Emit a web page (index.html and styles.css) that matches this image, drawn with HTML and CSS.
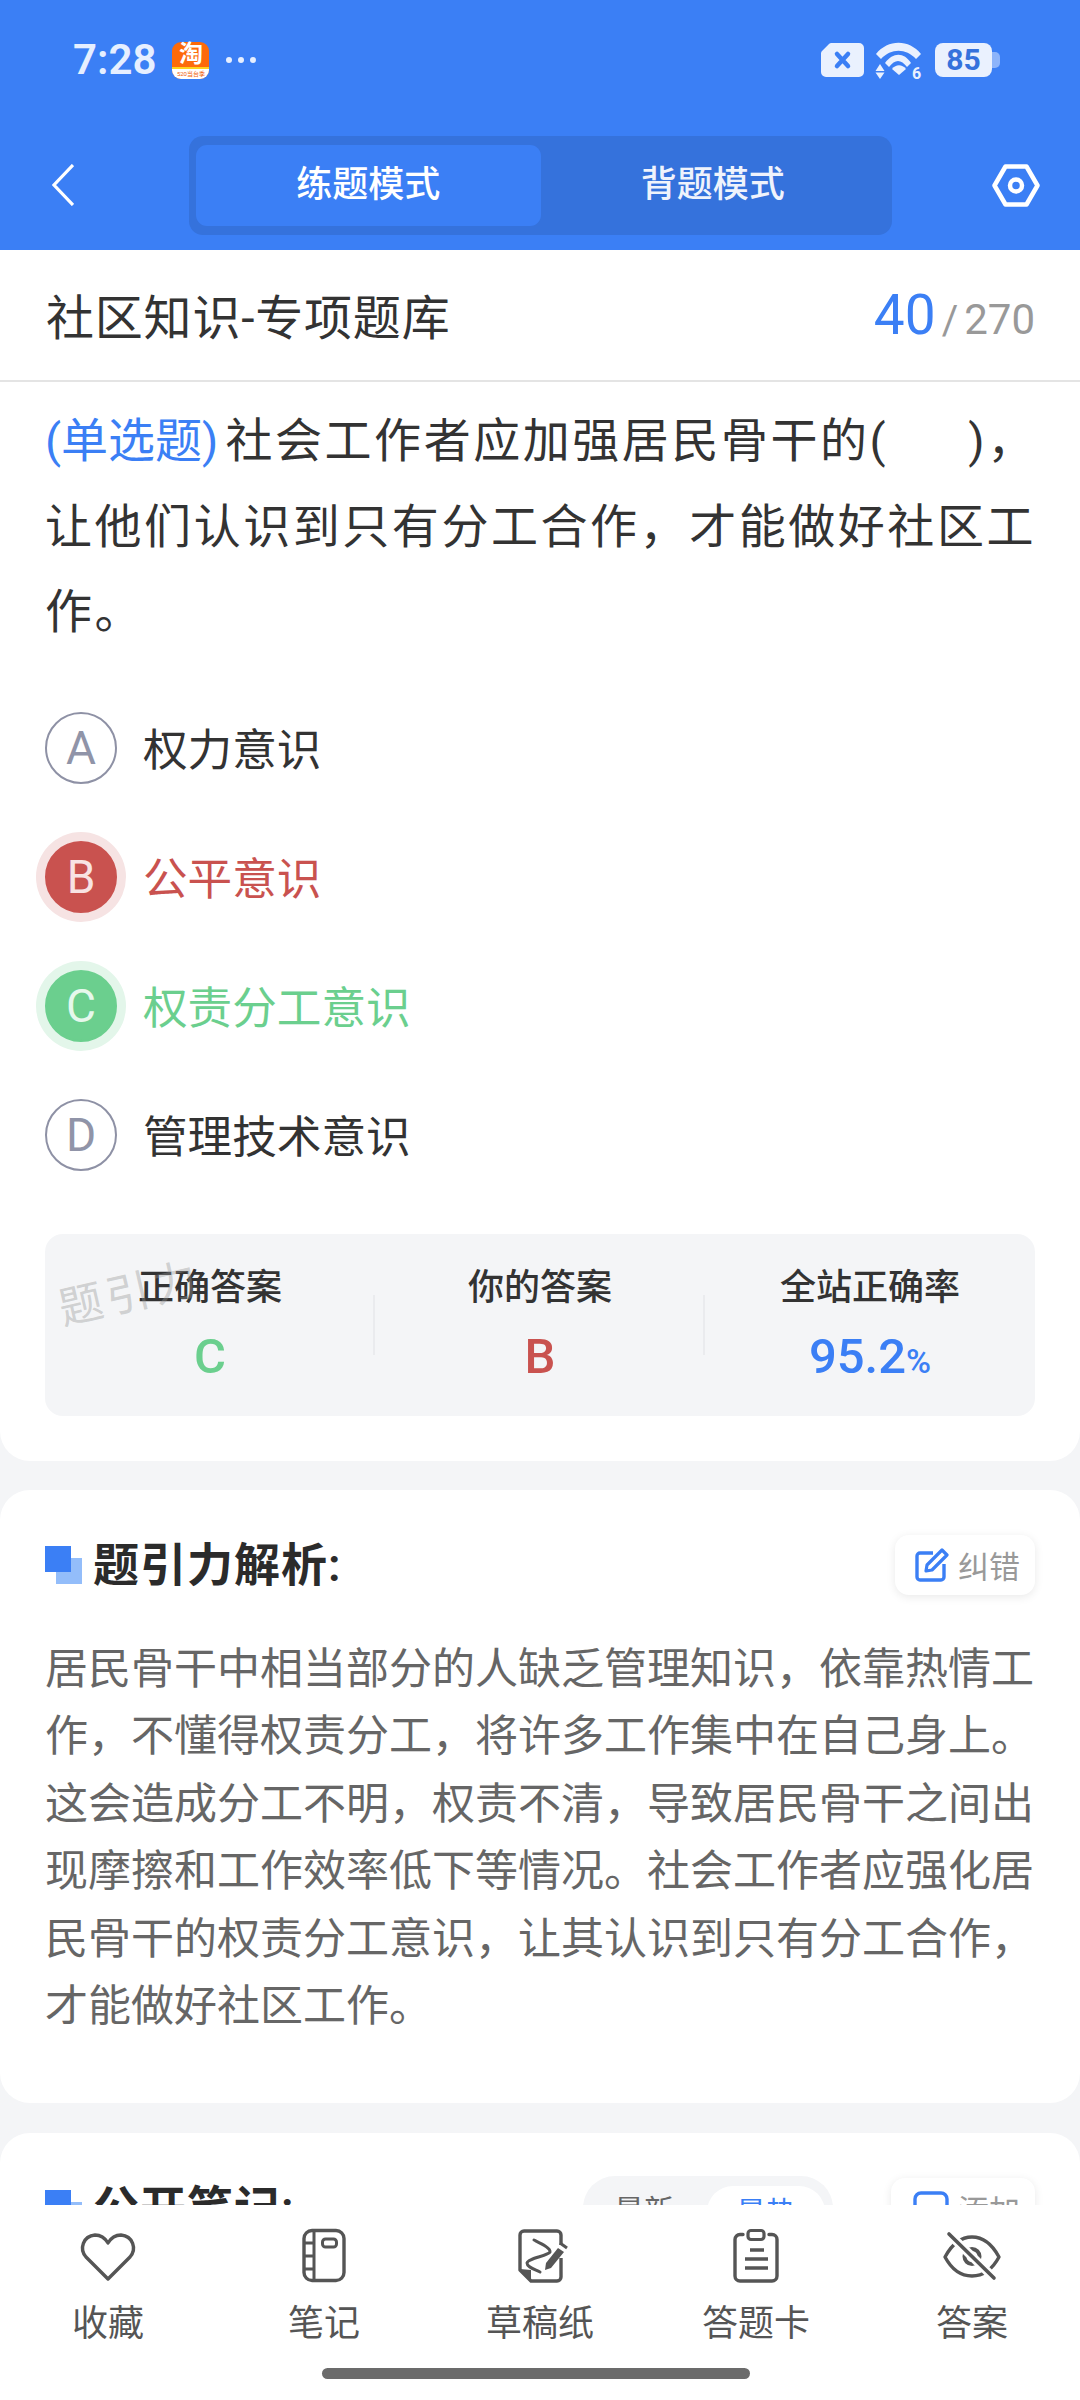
FILE: index.html
```html
<!DOCTYPE html>
<html lang="zh-CN">
<head>
    <meta charset="UTF-8">
    <meta name="viewport" content="width=device-width, initial-scale=1.0">
    <title>练题模式</title>
    <link rel="stylesheet" href="styles.css">
</head>
<body>

<header class="top">
    <div class="status">
        <span class="time">7:28</span>
        <span class="tb-icon"><span class="tb-char">淘</span><span class="tb-strip">520当台季</span></span>
        <span class="dots"><i></i><i></i><i></i></span>
        <span class="status-right">
            <svg class="ic-x" width="44" height="34" viewBox="0 0 44 34">
                <path d="M11 0H38a5 5 0 0 1 5 5V29a5 5 0 0 1-5 5H5a5 5 0 0 1-5-5V11a4 4 0 0 1 1-3L8 1a4 4 0 0 1 3-1Z" fill="#eaf1fe"/>
                <path d="M16 11L27 23M27 11L16 23" stroke="#3b7ff5" stroke-width="4.5" stroke-linecap="round"/>
            </svg>
            <svg class="ic-wifi" width="48" height="36" viewBox="0 0 48 36">
                <path d="M0 12C12 -3 33 -3 45 12L40 17C30 6 15 6 5 17Z" fill="#eaf1fe"/>
                <path d="M9 21C17 10 28 10 35 21L31 25C25 17 19 17 13 25Z" fill="#eaf1fe"/>
                <path d="M16 27C20 22 26 22 30 27L23 33Z" fill="#eaf1fe"/>
                <path d="M4 22L8.500 29H-.5ZM-.5 30.500H8.500L4 37Z" fill="#eaf1fe"/>
                <text class="wifi-six" x="36" y="37">6</text>
            </svg>
            <span class="battery"><span class="battery-body">85</span><span class="battery-tip"></span></span>
        </span>
    </div>
    <div class="toolbar">
        <div class="back">
            <svg width="22" height="42" viewBox="0 0 22 42"><path d="M21 1L2 21L21 41" fill="none" stroke="#fff" stroke-width="3.2"/></svg>
        </div>
        <div class="tabs">
            <div class="tab tab-on">练题模式</div>
            <div class="tab">背题模式</div>
        </div>
        <svg class="gear" width="48" height="43" viewBox="0 0 48 43">
            <path d="M2.500 21.500L13.500 2.500H34.500L45.500 21.500L34.500 40.500H13.500Z" fill="none" stroke="#fff" stroke-width="4.500" stroke-linejoin="round"/>
            <circle cx="24" cy="21.500" r="6" fill="none" stroke="#fff" stroke-width="4.500"/>
        </svg>
    </div>
</header>

<div class="title-row">
    <div class="bank-name">社区知识-专项题库</div>
    <div class="progress"><span class="cur">40</span><span class="slash">/</span><span class="total">270</span></div>
</div>

<main class="scroll">
    <section class="card question-card">
        <p class="question"><span class="q-type">(单选题)</span>社会工作者应加强居民骨干的(<span class="blank"></span>)，<br>让他们认识到只有分工合作，才能做好社区工<br>作。</p>

        <div class="option"><span class="mark">A</span><span class="opt-text">权力意识</span></div>
        <div class="option is-wrong"><span class="mark">B</span><span class="opt-text">公平意识</span></div>
        <div class="option is-right"><span class="mark">C</span><span class="opt-text">权责分工意识</span></div>
        <div class="option"><span class="mark">D</span><span class="opt-text">管理技术意识</span></div>

        <div class="stats">
            <div class="stat"><div class="stat-label">正确答案</div><div class="stat-val green">C</div></div>
            <div class="stat"><div class="stat-label">你的答案</div><div class="stat-val red">B</div></div>
            <div class="stat"><div class="stat-label">全站正确率</div><div class="stat-val blue">95.2<small>%</small></div></div>
            <div class="watermark">题引力</div>
        </div>
    </section>

    <section class="card analysis-card">
        <div class="card-head">
            <h3 class="head-title"><span class="squares"><i></i><i></i></span>题引力解析:</h3>
            <div class="small-btn">
                <svg width="34" height="34" viewBox="0 0 34 34">
                    <path d="M18 5H5a3 3 0 0 0-3 3V29a3 3 0 0 0 3 3H26a3 3 0 0 0 3-3V16" fill="none" stroke="#3b7ff5" stroke-width="3.400"/>
                    <path d="M12 17L27 2L32 7L17 22L11 23Z" fill="none" stroke="#3b7ff5" stroke-width="3.200" stroke-linejoin="round"/>
                </svg>
                <span>纠错</span>
            </div>
        </div>
        <p class="analysis">居民骨干中相当部分的人缺乏管理知识，依靠热情工<br>作，不懂得权责分工，将许多工作集中在自己身上。<br>这会造成分工不明，权责不清，导致居民骨干之间出<br>现摩擦和工作效率低下等情况。社会工作者应强化居<br>民骨干的权责分工意识，让其认识到只有分工合作，<br>才能做好社区工作。</p>
    </section>

    <section class="card notes-card">
        <div class="card-head">
            <h3 class="head-title"><span class="squares"><i></i><i></i></span>公开笔记:</h3>
            <div class="head-tools">
                <div class="sort"><span>最新</span><span class="sort-on">最热</span></div>
                <div class="small-btn add-btn">
                    <svg width="36" height="34" viewBox="0 0 36 34"><rect x="2" y="2" width="32" height="28" rx="6" fill="none" stroke="#3b7ff5" stroke-width="3.400"/><path d="M11 16H25" stroke="#3b7ff5" stroke-width="3.400"/></svg>
                    <span>添加</span>
                </div>
            </div>
        </div>
    </section>
</main>

<nav class="bottom">
    <div class="nav-items">
        <div class="nav-item">
            <svg width="60" height="56" viewBox="0 0 60 56"><path d="M30 51L8 29C1 21 5 8 17 7C23 7 27 10 30 15C33 10 37 7 43 7C55 8 59 21 52 29Z" fill="none" stroke="#555" stroke-width="3.400" stroke-linejoin="round"/></svg>
            <span>收藏</span>
        </div>
        <div class="nav-item">
            <svg width="60" height="56" viewBox="0 0 60 56">
                <rect x="10" y="2.500" width="40" height="50" rx="8" fill="none" stroke="#555" stroke-width="3.400"/>
                <path d="M20 3V52M10 15H20M10 28H20M10 41H20" fill="none" stroke="#555" stroke-width="3"/>
                <rect x="28.500" y="11" width="14" height="8" rx="3" fill="none" stroke="#555" stroke-width="3"/>
            </svg>
            <span>笔记</span>
        </div>
        <div class="nav-item">
            <svg width="60" height="56" viewBox="0 0 60 56">
                <path d="M51 17V7a4 4 0 0 0-4-4H14a4 4 0 0 0-4 4V42L21 53H47a4 4 0 0 0 4-4V30" fill="none" stroke="#555" stroke-width="3.400" stroke-linejoin="round"/>
                <path d="M10 41L21 42V53Z" fill="#555"/>
                <path d="M24 12C30 15 41 20 40 24C38 28 18 30 17 35C17 39 24 41 30 44" fill="none" stroke="#555" stroke-width="3" stroke-linecap="round"/>
                <path d="M48 20L54 24L41 40L35 42L36 35Z" fill="#555"/>
                <path d="M50 15L57 20" stroke="#555" stroke-width="3"/>
            </svg>
            <span>草稿纸</span>
        </div>
        <div class="nav-item">
            <svg width="60" height="56" viewBox="0 0 60 56">
                <path d="M17 6.500H14a5 5 0 0 0-5 5V48a5 5 0 0 0 5 5H46a5 5 0 0 0 5-5V11.500a5 5 0 0 0-5-5H43" fill="none" stroke="#555" stroke-width="3.400" stroke-linecap="round"/>
                <rect x="22" y="2.500" width="16" height="9" rx="3" fill="none" stroke="#555" stroke-width="3.200"/>
                <path d="M24 22H38M19 31H42M19 40H42" stroke="#555" stroke-width="3.400"/>
            </svg>
            <span>答题卡</span>
        </div>
        <div class="nav-item">
            <svg width="60" height="56" viewBox="0 0 60 56">
                <path d="M3 29C10 16 19 9 30 9C41 9 50 16 57 29C50 42 41 48 30 48C19 48 10 42 3 29Z" fill="none" stroke="#555" stroke-width="3.400" stroke-linejoin="round"/>
                <circle cx="30" cy="28.500" r="7.500" fill="none" stroke="#555" stroke-width="4"/>
                <path d="M7 6L52 50" stroke="#fff" stroke-width="9"/>
                <path d="M7 6L52 50" stroke="#555" stroke-width="3.600" stroke-linecap="round"/>
            </svg>
            <span>答案</span>
        </div>
    </div>
    <div class="home-bar"></div>
</nav>

</body>
</html>
```

FILE: styles.css
```css
* {
    box-sizing: border-box;
}

html, body {
    margin: 0;
    height: 2400px;
}

body {
    width: 1080px;
    display: flex;
    flex-direction: column;
    overflow: hidden;
    background: #f4f5f7;
    font-family: 'Roboto', 'Noto Sans CJK SC', sans-serif;
    color: #333;
}

/* top */
.top {
    height: 250px;
    flex: none;
    background: #3b7ff5;
}

.status {
    height: 120px;
    padding: 0 80px 0 73px;
    display: flex;
    align-items: center;
    color: #e6efff;
}

.time {
    font-size: 42px;
    font-weight: 600;
    line-height: 1;
}

.tb-icon {
    width: 37px;
    height: 37px;
    margin-left: 16px;
    border-radius: 9px;
    background: #fd6a0a;
    display: flex;
    flex-direction: column;
    align-items: center;
}

.tb-char {
    height: 25px;
    color: #fff;
    font-size: 24px;
    font-weight: 700;
    line-height: 25px;
}

.tb-strip {
    width: 100%;
    height: 12px;
    border-radius: 0 0 9px 9px;
    background: #fff;
    border-top: 2px solid #ffd21e;
    color: #f0600a;
    font-size: 6px;
    line-height: 10px;
    text-align: center;
}

.dots {
    margin-left: 17px;
    display: flex;
    gap: 6px;
}

.dots i {
    width: 6px;
    height: 6px;
    border-radius: 50%;
    background: #e6efff;
}

.status-right {
    margin-left: auto;
    display: flex;
    align-items: center;
    gap: 11px;
}

.ic-wifi {
    overflow: visible;
}

.wifi-six {
    fill: #eaf1fe;
    font-size: 16px;
    font-weight: 700;
}

.battery {
    display: flex;
    align-items: center;
}

.battery-body {
    width: 57px;
    height: 34px;
    border-radius: 8px;
    background: #eaf1fe;
    color: #3572dc;
    font-size: 30px;
    font-weight: 700;
    line-height: 34px;
    text-align: center;
}

.battery-tip {
    width: 8px;
    height: 16px;
    background: #8db4fa;
    border-radius: 0 5px 5px 0;
}

.toolbar {
    height: 130px;
    padding: 0 40px 0 52px;
    display: flex;
    align-items: center;
}

.back {
    width: 137px;
    display: flex;
}

.tabs {
    width: 703px;
    height: 99px;
    padding: 9px 7px;
    border-radius: 14px;
    background: #3572dc;
    display: flex;
}

.tab {
    flex: 1;
    border-radius: 11px;
    color: #fff;
    font-size: 36px;
    font-weight: 500;
    line-height: 81px;
    text-align: center;
    opacity: .92;
}

.tab-on {
    background: #3b7ff5;
    opacity: 1;
}

.gear {
    margin-left: auto;
}

/* title */
.title-row {
    height: 132px;
    flex: none;
    padding: 0 45px 0 46px;
    background: #fff;
    border-bottom: 2px solid #e4e4e4;
    display: flex;
    justify-content: space-between;
    align-items: center;
}

.bank-name {
    margin-bottom: 2px;
    font-size: 48px;
    letter-spacing: .8px;
    color: #333;
}

.progress {
    display: flex;
    align-items: baseline;
    color: #999;
    font-size: 42px;
}

.cur {
    color: #3b7ff5;
    font-size: 55px;
}

.slash {
    margin: 0 6px;
    font-size: 40px;
}

/* content */
.scroll {
    flex: 1;
    min-height: 0;
    overflow: hidden;
}

.card {
    background: #fff;
    border-radius: 30px;
    margin-bottom: 29px;
}

.question-card {
    padding: 16px 45px 45px;
    border-radius: 0 0 30px 30px;
}

.question {
    margin: 0 0 29px;
    font-size: 47px;
    line-height: 85.500px;
    letter-spacing: 2.550px;
    white-space: nowrap;
}

.q-type {
    margin-right: 7px;
    color: #3b7ff5;
    letter-spacing: 0;
}

.blank {
    display: inline-block;
    width: 80px;
}

.option {
    height: 129px;
    display: flex;
    align-items: center;
    font-size: 44.600px;
    color: #333;
}

.opt-text {
    margin-bottom: 3px;
}

.mark {
    width: 72px;
    height: 72px;
    margin-right: 26px;
    flex: none;
    border: 2px solid #8e91a5;
    border-radius: 50%;
    color: #9094a8;
    font-size: 46px;
    line-height: 68px;
    text-align: center;
}

.is-wrong {
    color: #c9524f;
}

.is-wrong .mark {
    background: #c9524f;
    border-color: #c9524f;
    color: #f8e3e3;
    box-shadow: 0 0 0 9px #f6e3e3;
}

.is-right {
    color: #6bcf8e;
}

.is-right .mark {
    background: #6bcf8e;
    border-color: #6bcf8e;
    color: #e6f8ec;
    box-shadow: 0 0 0 9px #e3f6ea;
}

.stats {
    position: relative;
    height: 182px;
    margin-top: 34px;
    padding-top: 29px;
    border-radius: 18px;
    background: #f4f5f7;
    display: flex;
}

.stat {
    flex: 1;
    text-align: center;
    position: relative;
}

.stat + .stat::before {
    content: "";
    position: absolute;
    left: -2px;
    top: 32px;
    width: 2px;
    height: 60px;
    background: #eaebee;
}

.stat-label {
    font-size: 36px;
    font-weight: 500;
    line-height: 50px;
}

.stat-val {
    margin-top: 19px;
    font-size: 49px;
    font-weight: 500;
    line-height: 50px;
}

.stat-val small {
    font-size: 34px;
}

.green {
    color: #6bcf8e;
}

.red {
    color: #c9524f;
}

.blue {
    color: #3b7ff5;
}

.watermark {
    position: absolute;
    left: 12px;
    top: 24px;
    color: rgba(150, 150, 150, .4);
    font-size: 44px;
    letter-spacing: 4px;
    transform: rotate(-13deg);
}

.analysis-card {
    padding: 45px 45px 62px;
    margin-bottom: 30px;
}

.notes-card {
    padding: 45px 45px 0;
    margin-bottom: 0;
}

.card-head {
    height: 60px;
    display: flex;
    justify-content: space-between;
    align-items: center;
}

.head-title {
    margin: 0;
    display: flex;
    align-items: center;
    font-size: 46px;
    font-weight: 600;
    letter-spacing: 1px;
    color: #2b2b2b;
    line-height: 56px;
}

.squares {
    position: relative;
    width: 37px;
    height: 37px;
    margin-right: 11px;
}

.squares i {
    position: absolute;
    left: 0;
    top: 0;
    width: 26px;
    height: 26px;
    background: #3b7ff5;
    z-index: 1;
}

.squares i + i {
    left: 11px;
    top: 12px;
    background: #93bdfa;
    z-index: 0;
}

.small-btn {
    height: 60px;
    padding: 0 15px 0 20px;
    border-radius: 14px;
    background: #fff;
    box-shadow: 0 2px 10px rgba(0, 0, 0, .09);
    display: flex;
    align-items: center;
    gap: 9px;
    color: #999;
    font-size: 31px;
}

.analysis {
    margin: 41px 0 0;
    color: #666;
    font-size: 43px;
    line-height: 67.600px;
    white-space: nowrap;
}

.head-tools {
    display: flex;
    align-items: center;
    gap: 58px;
}

.sort {
    width: 250px;
    height: 64px;
    padding-left: 31px;
    border-radius: 32px 32px 0 0;
    background: #f4f5f7;
    display: flex;
    align-items: center;
    color: #666;
    font-size: 30px;
}

.sort-on {
    height: 54px;
    width: 118px;
    margin-left: 33px;
    margin-top: 10px;
    border-radius: 26px 26px 0 0;
    background: #fff;
    color: #3b7ff5;
    line-height: 54px;
    text-align: center;
}

.add-btn {
    padding-left: 22px;
}

/* bottom nav */
.bottom {
    height: 195px;
    flex: none;
    background: #fff;
    position: relative;
}

.nav-items {
    padding-top: 23px;
    display: flex;
}

.nav-item {
    width: 216px;
    display: flex;
    flex-direction: column;
    align-items: center;
    color: #555;
    font-size: 36px;
    line-height: 40px;
}

.nav-item span {
    margin-top: 20px;
}

.home-bar {
    width: 428px;
    height: 11px;
    margin: 24px auto 0 322px;
    border-radius: 6px;
    background: #6b6b6b;
}
```
